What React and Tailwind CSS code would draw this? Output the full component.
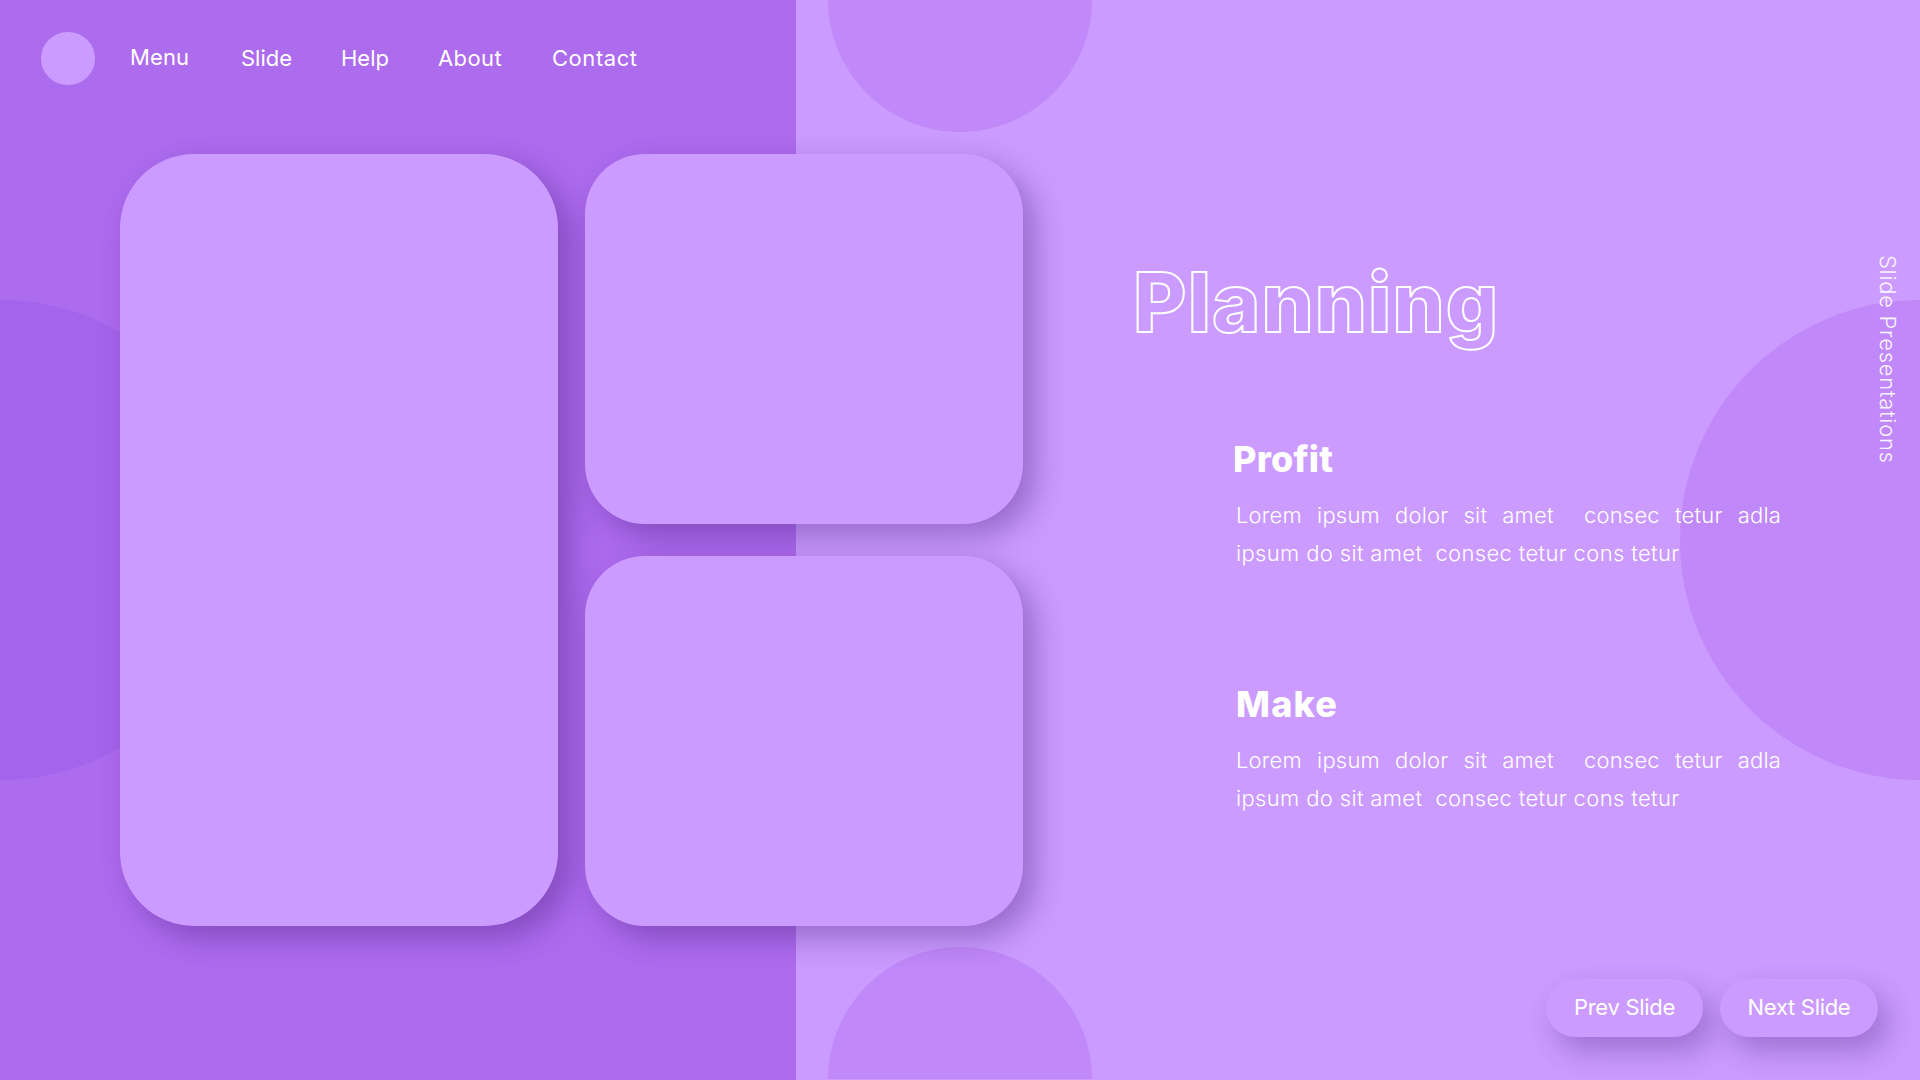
const navItems = [
  { label: 'Slide', className: 'w-[100px]' },
  { label: 'Help', className: 'w-[97px]' },
  { label: 'About', className: 'w-[114px] tracking-[0.4px]' },
  { label: 'Contact', className: 'tracking-[0.55px]' },
];

const Section = ({ title, titleClass, className }) => (
  <div className={className}>
    <h2 className={`text-[36px] leading-[44px] font-extrabold text-white ${titleClass}`}>{title}</h2>
    <p className="mt-[15px] w-[545px] text-[22px] leading-[38px] font-light text-white">
      <span className="block text-justify tracking-[0.2px] [text-align-last:justify]">
        Lorem ipsum dolor sit amet {'\u00a0'}consec tetur adla
      </span>
      <span className="block tracking-[0.35px]">ipsum do sit amet {'\u00a0'}consec tetur cons tetur</span>
    </p>
  </div>
);

const Card = ({ className }) => (
  <div className={`rounded-[60px] bg-[#cb9bff] shadow-[12px_12px_30px_rgba(60,20,110,0.36)] ${className}`} />
);

const App = () => {
  return (
    <div className="relative h-[1080px] w-[1920px] overflow-hidden bg-[#cb9bff] font-['Inter',sans-serif]">
      {/* Background */}
      <div className="absolute inset-y-0 left-0 w-[796px] bg-[#ad6bee]" />
      <div className="absolute left-[-240px] top-[300px] h-[480px] w-[480px] rounded-full bg-[#a564ec]" />
      <div className="absolute left-[1680px] top-[300px] h-[480px] w-[480px] rounded-full bg-[#c088f9]" />
      <div className="absolute left-[828px] top-[-132px] h-[264px] w-[264px] rounded-full bg-[#c088f9]" />
      <div className="absolute left-[828px] top-[947px] h-[132px] w-[264px] rounded-t-[132px] bg-[#c088f9]" />

      <div className="relative flex h-full">
        {/* Left side */}
        <div className="w-[1133px] shrink-0">
          <nav className="mt-[32px] flex h-[53px] items-center pl-[41px]">
            <div className="h-[53px] w-[54px] rounded-full bg-[#cb9bff]" />
            <a className="ml-[35px] w-[111px] -translate-y-px text-[22px] tracking-[0.1px] text-white">Menu</a>
            <div className="flex text-[22px] text-white">
              {navItems.map((item) => (
                <a key={item.label} className={item.className}>{item.label}</a>
              ))}
            </div>
          </nav>

          <div className="ml-[120px] mt-[69px] grid grid-cols-[438px_438px] grid-rows-[370px_370px] gap-x-[27px] gap-y-[32px]">
            <Card className="row-span-2 rounded-[74px]" />
            <Card />
            <Card />
          </div>
        </div>

        {/* Right side */}
        <div className="relative flex flex-1 flex-col">
          <h1 className="mt-[253px] text-[82px] leading-[100px] font-extrabold tracking-[1.2px] text-transparent [-webkit-text-stroke:2px_white]">
            Planning
          </h1>
          <Section title="Profit" titleClass="-ml-[3px] tracking-[0.2px]" className="ml-[103px] mt-[84px]" />
          <Section title="Make" titleClass="tracking-[1.2px]" className="ml-[103px] mt-[110px]" />

          <div className="mb-[43px] mr-[42px] mt-auto flex justify-end gap-[17px] text-[22px] tracking-[-0.3px] text-white">
            <button className="h-[58px] w-[157px] rounded-full bg-[#cb9bff] pb-[2px] shadow-[10px_14px_28px_rgba(60,20,110,0.3)]">
              Prev Slide
            </button>
            <button className="h-[58px] w-[158px] rounded-full bg-[#cb9bff] pb-[2px] shadow-[10px_14px_28px_rgba(60,20,110,0.3)]">
              Next Slide
            </button>
          </div>

          <div className="absolute right-[20px] top-[255px] text-[22px] leading-[24px] font-light tracking-[0.7px] text-white/90 [writing-mode:vertical-rl]">
            Slide Presentations
          </div>
        </div>
      </div>
    </div>
  );
};

export default App;
